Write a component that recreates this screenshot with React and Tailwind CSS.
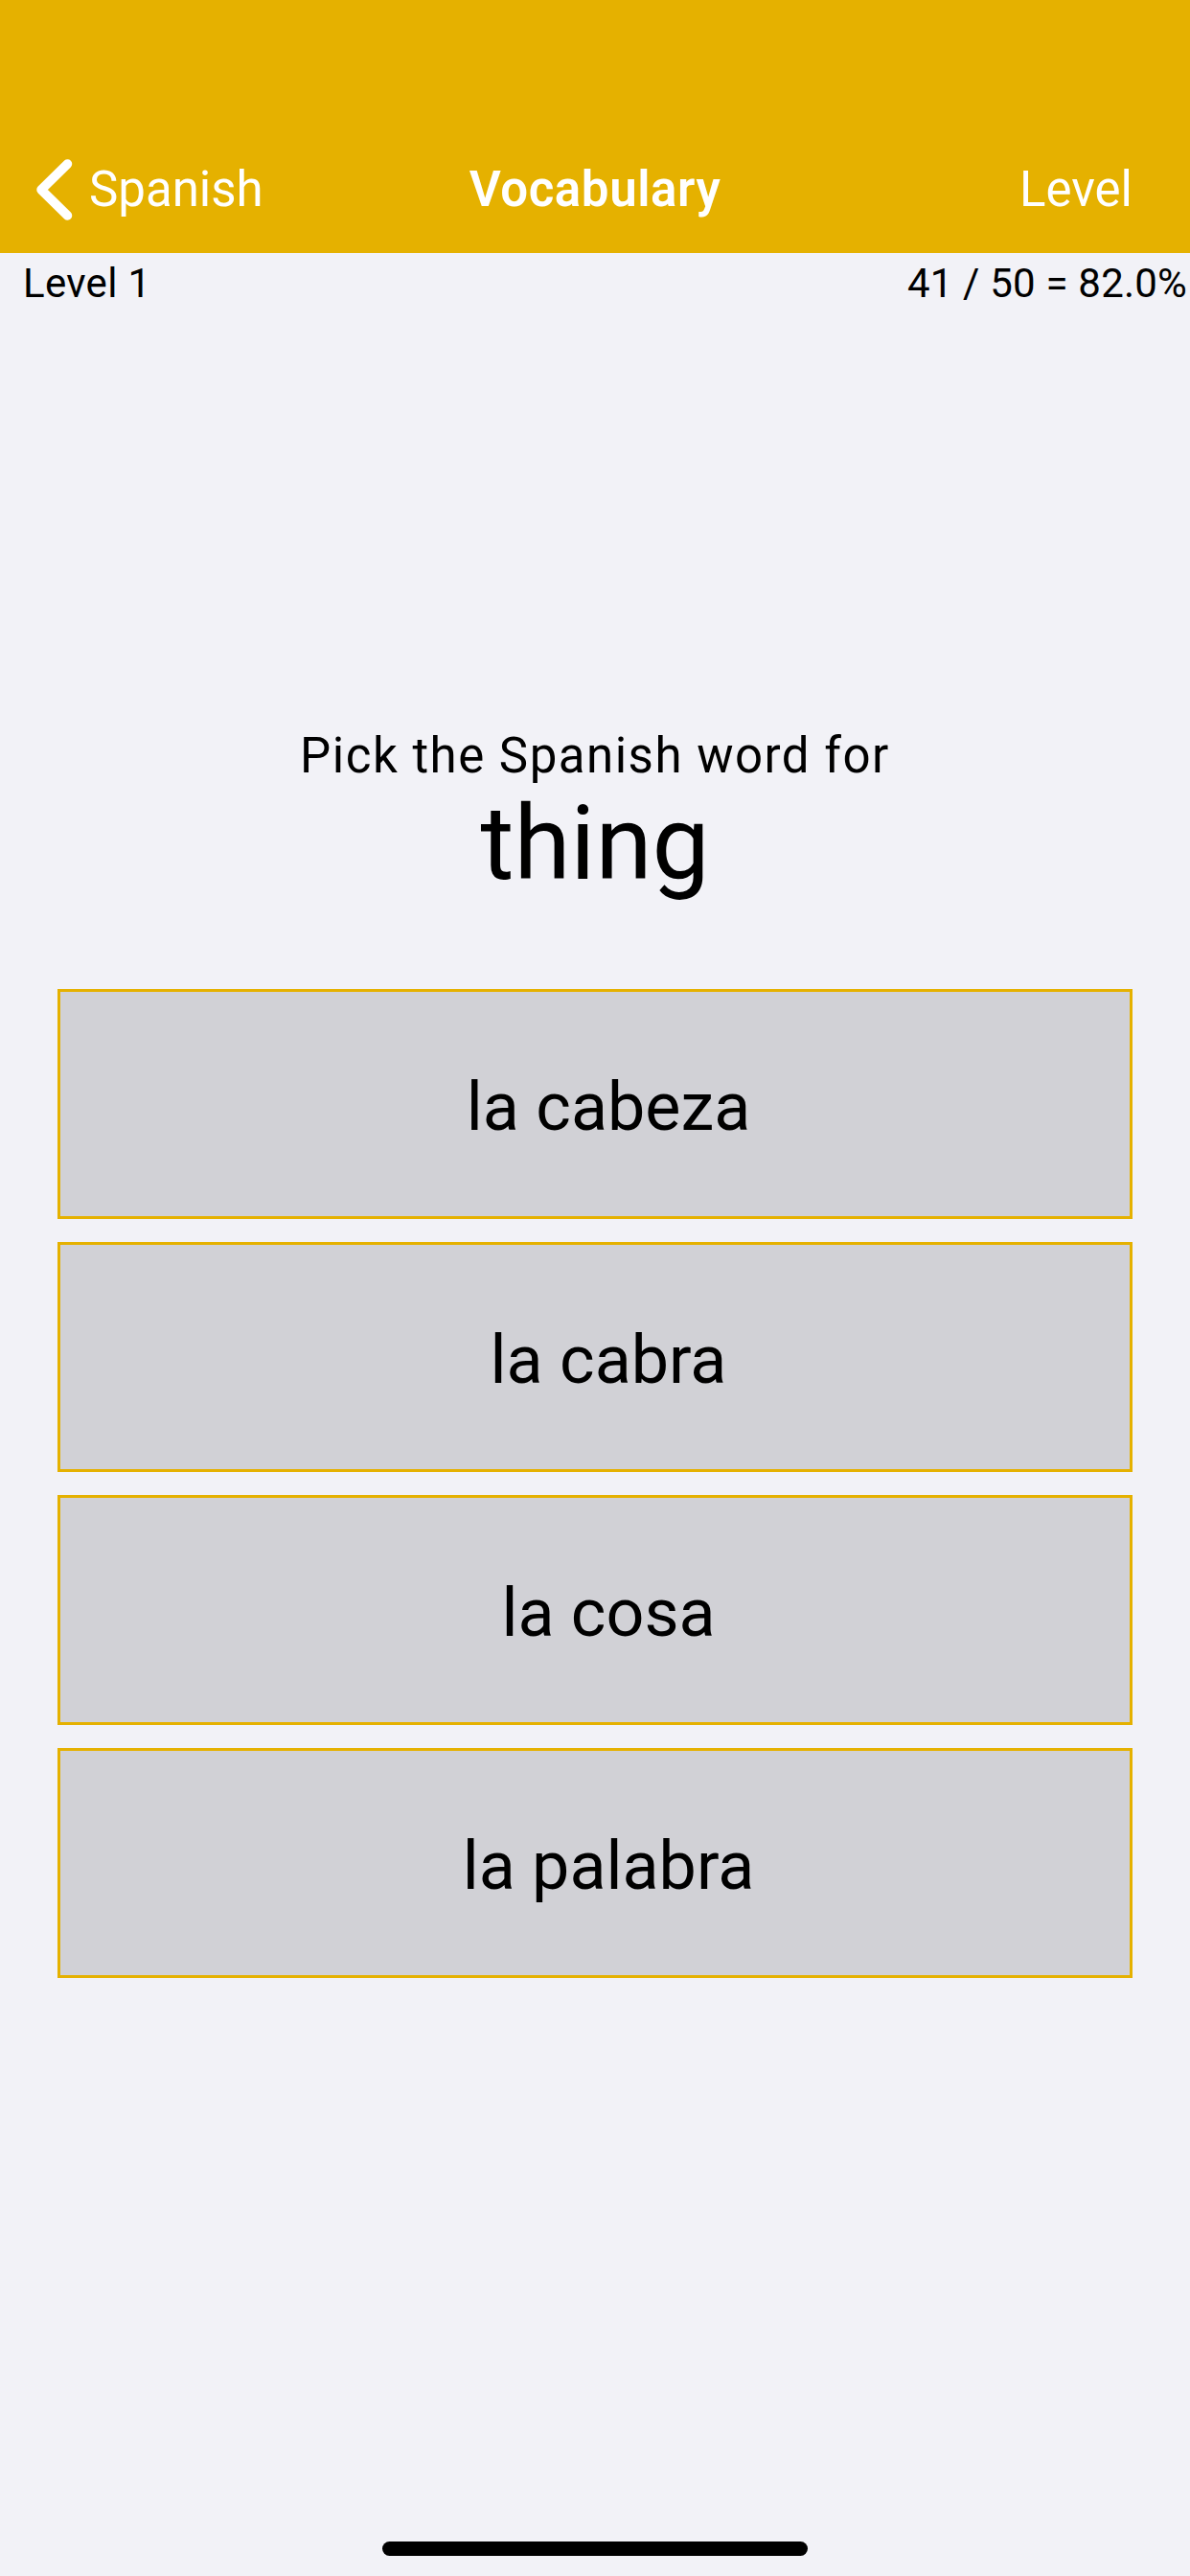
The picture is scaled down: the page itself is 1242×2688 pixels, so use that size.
import React from "react";

const choices = ["la cabeza", "la cabra", "la cosa", "la palabra"];

const BackChevron = () => (
  <svg width="40" height="66" viewBox="0 0 40 66" fill="none">
    <polyline
      points="34.5,6 7,33 34.5,60"
      stroke="white"
      strokeWidth="9.5"
      strokeLinecap="round"
      strokeLinejoin="round"
    />
  </svg>
);

const App = () => {
  return (
    <div className="min-h-[2688px] w-[1242px] bg-[#F2F2F7] flex flex-col font-['Roboto',sans-serif] text-black">
      {/* Yellow nav header */}
      <div className="h-[264px] bg-[#E5B100] flex flex-col justify-end">
        <div className="h-[132px] grid grid-cols-[1fr_auto_1fr] items-center text-white text-[51px] leading-[60px]">
          <div className="flex items-center pl-[36px] gap-[17px]">
            <BackChevron />
            <span>Spanish</span>
          </div>
          <div className="font-semibold tracking-[0.6px]">Vocabulary</div>
          <div className="text-right pr-[60px]">Level</div>
        </div>
      </div>

      {/* Level / score row */}
      <div className="mt-[7px] flex justify-between pl-[24px] pr-[3px] text-[42px] leading-[50px]">
        <span className="tracking-[0.3px]">Level 1</span>
        <span className="tracking-[0.2px]">41 / 50 = 82.0%</span>
      </div>

      {/* Prompt */}
      <div className="mt-[438px] flex flex-col items-center">
        <p className="text-[51px] leading-[60px] tracking-[1.5px]">Pick the Spanish word for</p>
        <p className="text-[107px] leading-[124px]">thing</p>
      </div>

      {/* Answer choices */}
      <div className="mt-[89px] px-[60px] flex flex-col gap-[24px]">
        {choices.map((c) => (
          <button
            key={c}
            className="h-[240px] w-full border-[3px] border-[#E5B100] bg-[#D1D1D6] flex items-center justify-center pl-[28px] pt-[6px] text-[70px] leading-[82px]"
          >
            {c}
          </button>
        ))}
      </div>

      {/* Home indicator */}
      <div className="mt-auto mb-[21px] flex justify-center">
        <div className="h-[15px] w-[444px] rounded-full bg-black" />
      </div>
    </div>
  );
};

export default App;
